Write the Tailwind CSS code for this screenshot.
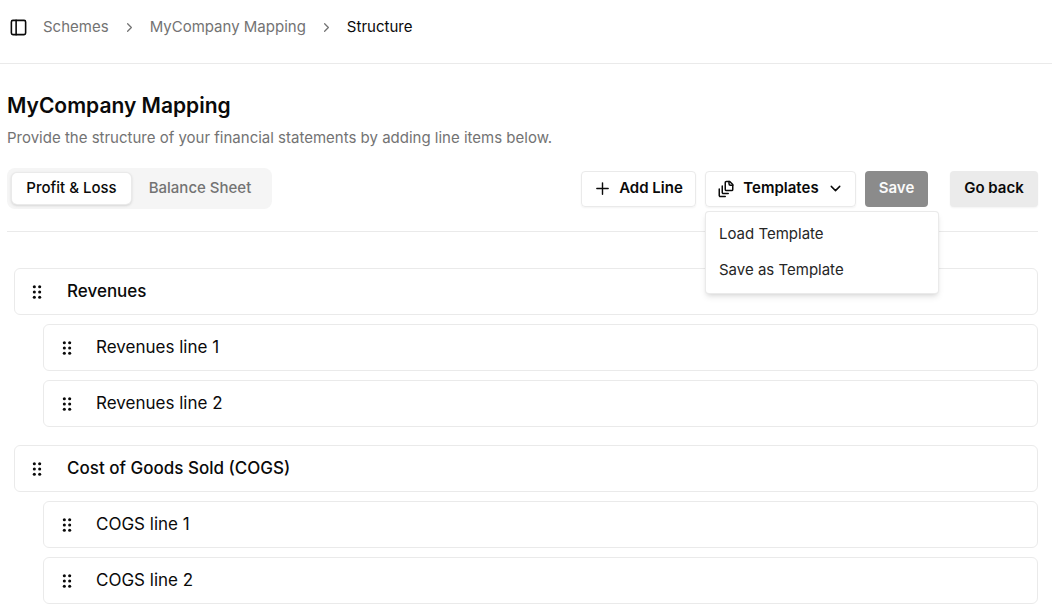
<!DOCTYPE html>
<html lang="en">
<head>
<meta charset="utf-8">
<meta name="viewport" content="width=device-width, initial-scale=1">
<title>MyCompany Mapping – Structure</title>
<script src="https://cdn.jsdelivr.net/npm/@tailwindcss/browser@4"></script>
</head>
<body class="bg-white font-['Inter','Liberation_Sans',sans-serif] text-neutral-950">
<svg class="hidden" aria-hidden="true">
  <symbol id="grip" viewBox="0 0 24 24" fill="currentColor">
    <circle cx="8" cy="4" r="2.3"/><circle cx="16" cy="4" r="2.3"/>
    <circle cx="8" cy="12" r="2.3"/><circle cx="16" cy="12" r="2.3"/>
    <circle cx="8" cy="20" r="2.3"/><circle cx="16" cy="20" r="2.3"/>
  </symbol>
  <symbol id="chevron" viewBox="0 0 24 24" fill="none" stroke="currentColor" stroke-width="2" stroke-linecap="round" stroke-linejoin="round">
    <path d="m9 18 6-6-6-6"/>
  </symbol>
</svg>

<header class="flex h-16 items-center border-b border-neutral-200/80 px-2 pb-2">
  <button type="button" aria-label="Toggle sidebar" class="mr-[15px] flex size-5 items-center justify-center">
    <svg class="size-[19px]" viewBox="0 0 24 24" fill="none" stroke="currentColor" stroke-width="2" stroke-linecap="round" stroke-linejoin="round"><rect x="3" y="3" width="18" height="18" rx="2"/><path d="M9 3v18"/></svg>
  </button>
  <nav aria-label="Breadcrumb" class="pb-0.5">
    <ol class="flex items-center gap-[13px] text-[15px] leading-5 text-neutral-500">
      <li><a href="#">Schemes</a></li>
      <li aria-hidden="true" class="pt-0.5"><svg class="size-[15px]"><use href="#chevron"/></svg></li>
      <li><a href="#">MyCompany Mapping</a></li>
      <li aria-hidden="true" class="pt-0.5"><svg class="size-[15px]"><use href="#chevron"/></svg></li>
      <li class="text-neutral-950" aria-current="page">Structure</li>
    </ol>
  </nav>
</header>

<main class="pt-7 pr-[14px] pl-[7px]">
  <h1 class="text-[21px] leading-7 font-semibold">MyCompany Mapping</h1>
  <p class="mt-1.5 text-[15px] leading-6 text-neutral-500">Provide the structure of your financial statements by adding line items below.</p>

  <div class="mt-[18px] flex items-center justify-between border-b border-neutral-200/80 pb-[22px]">
    <div role="tablist" class="flex h-[41px] w-[265px] rounded-lg bg-neutral-100 p-1 text-[15px] font-medium">
      <button type="button" role="tab" aria-selected="true" class="w-[121px] rounded-md border border-neutral-200/80 bg-white shadow-sm">Profit &amp; Loss</button>
      <button type="button" role="tab" aria-selected="false" class="flex-1 text-neutral-500">Balance Sheet</button>
    </div>
    <div class="flex h-9 text-[15px] font-semibold">
      <button type="button" class="flex w-[115px] items-center justify-center gap-2 rounded border border-neutral-200/80 shadow-xs">
        <svg class="size-[17px]" viewBox="0 0 24 24" fill="none" stroke="currentColor" stroke-width="2" stroke-linecap="round"><path d="M4 12h16M12 4v16"/></svg>
        <span>Add Line</span>
      </button>
      <div class="relative ml-[9px]">
        <button type="button" aria-haspopup="menu" aria-expanded="true" class="flex h-9 w-[151px] items-center justify-center gap-2 rounded border border-neutral-200/80 shadow-xs">
          <svg class="size-[18px]" viewBox="0 0 24 24" fill="none" stroke="currentColor" stroke-width="2" stroke-linecap="round" stroke-linejoin="round"><path d="M21 7h-3a2 2 0 0 1-2-2V2"/><path d="M21 6v6.5c0 .8-.7 1.5-1.5 1.5h-7c-.8 0-1.5-.7-1.5-1.5v-9c0-.8.7-1.5 1.5-1.5H17Z"/><path d="M7 8v8.8c0 .3.2.6.4.8.2.2.5.4.8.4H15"/><path d="M3 12v8.8c0 .3.2.6.4.8.2.2.5.4.8.4H11"/></svg>
          <span>Templates</span>
          <svg class="size-[17px] rotate-90"><use href="#chevron"/></svg>
        </button>
        <div role="menu" class="absolute top-10 left-0 z-10 flex w-[234px] flex-col rounded border border-neutral-200/80 bg-white px-1 pt-[5px] pb-1 text-[15px] font-normal text-neutral-800 shadow-md">
          <button type="button" role="menuitem" class="h-9 px-[9px] text-left">Load Template</button>
          <button type="button" role="menuitem" class="h-9 px-[9px] text-left">Save as Template</button>
        </div>
      </div>
      <button type="button" disabled class="ml-[9px] w-[63px] rounded bg-[#8b8b8b] text-neutral-50">Save</button>
      <button type="button" class="ml-[22px] w-[88px] rounded bg-[#ebebeb] shadow-xs">Go back</button>
    </div>
  </div>

  <ul class="mt-9 flex flex-col gap-[18px] pl-[7px] text-[17px]">
    <li>
      <div class="flex h-[47px] items-center gap-[22px] rounded-md border border-neutral-200/80 px-[14px] font-medium"><svg class="size-4 shrink-0"><use href="#grip"/></svg><span>Revenues</span></div>
      <ul class="mt-[9px] flex flex-col gap-[9px] pl-[29px]">
        <li class="flex h-[47px] items-center gap-[21px] rounded-md border border-neutral-200/80 px-[15px]"><svg class="size-4 shrink-0"><use href="#grip"/></svg><span>Revenues line 1</span></li>
        <li class="flex h-[47px] items-center gap-[21px] rounded-md border border-neutral-200/80 px-[15px]"><svg class="size-4 shrink-0"><use href="#grip"/></svg><span>Revenues line 2</span></li>
      </ul>
    </li>
    <li>
      <div class="flex h-[47px] items-center gap-[22px] rounded-md border border-neutral-200/80 px-[14px] font-medium"><svg class="size-4 shrink-0"><use href="#grip"/></svg><span>Cost of Goods Sold (COGS)</span></div>
      <ul class="mt-[9px] flex flex-col gap-[9px] pl-[29px]">
        <li class="flex h-[47px] items-center gap-[21px] rounded-md border border-neutral-200/80 px-[15px]"><svg class="size-4 shrink-0"><use href="#grip"/></svg><span>COGS line 1</span></li>
        <li class="flex h-[47px] items-center gap-[21px] rounded-md border border-neutral-200/80 px-[15px]"><svg class="size-4 shrink-0"><use href="#grip"/></svg><span>COGS line 2</span></li>
      </ul>
    </li>
  </ul>
</main>
</body>
</html>
